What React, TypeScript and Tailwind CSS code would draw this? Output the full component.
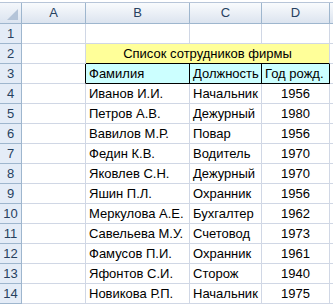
import React from 'react';

const rows: [string, string, string][] = [
  ['Иванов И.И.', 'Начальник', '1956'],
  ['Петров А.В.', 'Дежурный', '1980'],
  ['Вавилов М.Р.', 'Повар', '1956'],
  ['Федин К.В.', 'Водитель', '1970'],
  ['Яковлев С.Н.', 'Дежурный', '1970'],
  ['Яшин П.Л.', 'Охранник', '1956'],
  ['Меркулова А.Е.', 'Бухгалтер', '1962'],
  ['Савельева М.У.', 'Счетовод', '1973'],
  ['Фамусов П.И.', 'Охранник', '1961'],
  ['Яфонтов С.И.', 'Сторож', '1940'],
  ['Новикова Р.П.', 'Начальник', '1975'],
];

const cols = ['A', 'B', 'C', 'D', ''];

function RowHead({ n }: { n: number | string }) {
  return (
    <div className="h-5 flex items-center justify-center bg-[#e4ecf7] border-r border-b border-[#9eb6ce] text-[#27415f]">
      {n}
    </div>
  );
}

function Cell({ children, className = '' }: { children?: React.ReactNode; className?: string }) {
  return (
    <div className={`h-5 flex items-center px-[3px] whitespace-nowrap border-r border-b border-[#d0d7e5] ${className}`}>
      {children}
    </div>
  );
}

export default function App() {
  return (
    <div className="w-[333px] h-[306px] overflow-hidden bg-white text-[13px] text-black font-['Liberation_Sans',Arial,sans-serif]">
      <div className="h-[3px] border-b border-[#b7c5d8] bg-white" />
      <div className="grid grid-cols-[22px_64px_104px_72px_68px_1fr]">
        {/* column headers */}
        <div className="h-[21px] relative bg-gradient-to-b from-[#f4f7fb] to-[#dbe4f0] border-r border-b border-[#9eb6ce]">
          <div className="absolute right-[3px] bottom-[3px] w-0 h-0 border-l-[11px] border-l-transparent border-b-[11px] border-b-[#b4c4d8]" />
        </div>
        {cols.map((c, i) => (
          <div
            key={i}
            className="h-[21px] flex items-center justify-center bg-gradient-to-b from-[#f9fbfd] to-[#dce4ef] border-r border-b border-[#9eb6ce] text-[#27415f]"
          >
            {c}
          </div>
        ))}

        {/* row 1 */}
        <RowHead n={1} />
        <Cell />
        <Cell />
        <Cell />
        <Cell />
        <Cell />

        {/* row 2: title */}
        <RowHead n={2} />
        <Cell />
        <div className="col-span-3 h-5 flex items-center justify-center bg-[#ffff99] border-b border-black border-r border-r-[#d0d7e5]">
          Список сотрудников фирмы
        </div>
        <Cell />

        {/* row 3: table head */}
        <RowHead n={3} />
        <Cell className="border-r-black" />
        <Cell className="bg-[#ccffff] border-black">Фамилия</Cell>
        <Cell className="bg-[#ccffff] border-black">Должность</Cell>
        <Cell className="bg-[#ccffff] border-black">Год рожд.</Cell>
        <Cell />

        {rows.map(([name, job, year], i) => (
          <React.Fragment key={i}>
            <RowHead n={i + 4} />
            <Cell />
            <Cell>{name}</Cell>
            <Cell>{job}</Cell>
            <Cell className="justify-center">{year}</Cell>
            <Cell />
          </React.Fragment>
        ))}
      </div>
    </div>
  );
}
